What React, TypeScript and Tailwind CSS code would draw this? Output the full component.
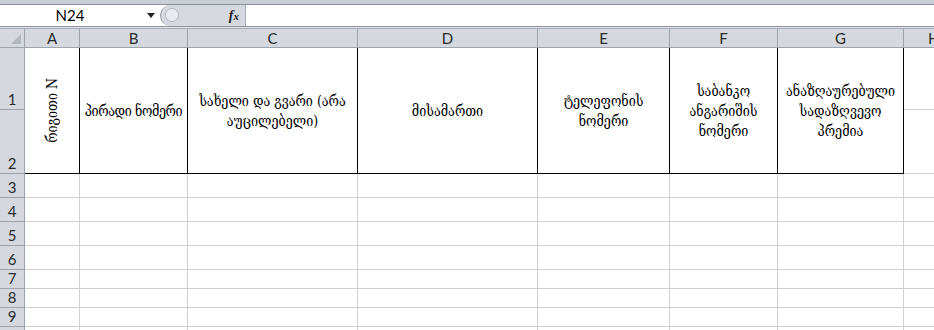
import React from "react";

const cols = ["A", "B", "C", "D", "E", "F", "G"];

const heads = [
  "პირადი ნომერი",
  "სახელი და გვარი (არა აუცილებელი)",
  "მისამართი",
  "ტელეფონის ნომერი",
  "საბანკო ანგარიშის ნომერი",
  "ანაზღაურებული სადაზღვევო პრემია",
];

const bodyRows = [3, 4, 5, 6, 7, 8, 9, 10];

const geo = { fontFamily: '"DejaVu Serif Condensed", "DejaVu Serif", serif' };
const ui = { fontFamily: 'Lato, "Open Sans", "Liberation Sans", sans-serif' };

function RowHead({ n }: { n: number | string }) {
  return (
    <div
      className="bg-[#d5d9df] border-r border-b border-[#9ea4ab] flex items-end justify-center text-[15px] leading-[18px] text-[#2b2b2b] pb-[1px]"
      style={ui}
    >
      {n}
    </div>
  );
}

export default function App() {
  return (
    <div className="w-[934px] h-[330px] overflow-hidden bg-white">
      {/* formula bar */}
      <div className="h-[5px] bg-[#c9ced5] border-b border-[#8c9299]" />
      <div className="h-[21px] flex bg-white">
        <div className="w-[160px] flex items-center relative">
          <span className="w-[140px] text-center text-[15px] text-black" style={ui}>
            N24
          </span>
          <span className="absolute left-[147px] top-[8px] w-0 h-0 border-l-[4px] border-r-[4px] border-t-[5px] border-l-transparent border-r-transparent border-t-[#222]" />
        </div>
        <div className="w-[85px] h-[21px] bg-[#d6dae0] rounded-l-full border-l border-[#8f959c] flex items-center relative">
          <span className="absolute left-[4px] top-[3px] w-[14px] h-[14px] rounded-full bg-[#e8ebef] border border-[#b5bac1]" />
          <span className="ml-auto mr-[6px] text-[14px] italic font-bold text-[#222]" style={{ fontFamily: '"Liberation Serif", serif' }}>
            f<span className="text-[11px]">x</span>
          </span>
        </div>
        <div className="flex-1 border-l border-[#a9aeb5] bg-white" />
      </div>
      <div className="h-[1px] bg-[#8c9299]" />
      <div className="h-[2px] bg-[#e3e6ea] border-b border-[#a4a9b0]" />

      {/* sheet */}
      <div className="grid grid-cols-[25px_55px_108px_170px_180px_132px_108px_126px_1fr] grid-rows-[19px_62px_64px_24px_24px_24px_24px_19px_19px_19px_19px]">
        <div className="bg-[#d5d9df] border-r border-b border-[#9ea4ab] relative">
          <span className="absolute right-[3px] bottom-[3px] w-0 h-0 border-solid border-l-[10px] border-b-[10px] border-l-transparent border-b-[#b4b9c0]" />
        </div>
        {[...cols, "H"].map((c) => (
          <div
            key={c}
            className={`bg-[#d5d9df] border-r border-b border-[#9ea4ab] flex items-center text-[15px] text-[#2b2b2b] ${c === "H" ? "justify-start pl-[24px]" : "justify-center"}`}
            style={ui}
          >
            {c}
          </div>
        ))}

        {/* row 1-2, merged header cells */}
        <RowHead n={1} />
        <div className="row-span-2 border-r border-b border-black flex items-center justify-center">
          <span className="[writing-mode:vertical-rl] rotate-180 text-[14px] text-black whitespace-nowrap" style={geo}>
            რიგითი N
          </span>
        </div>
        {heads.map((h, i) => (
          <div
            key={h}
            className={`row-span-2 border-r border-b border-black flex items-center justify-center text-center text-[14px] leading-[20px] text-black ${i === 0 ? "px-0 whitespace-nowrap tracking-[-0.4px]" : "px-[3px]"}`}
            style={geo}
          >
            {h}
          </div>
        ))}
        <div className="border-r border-b border-[#d0d0d0]" />
        <RowHead n={2} />
        <div className="border-r border-b border-[#d0d0d0]" />

        {bodyRows.map((r) => (
          <React.Fragment key={r}>
            <RowHead n={r < 10 ? r : ""} />
            {[...cols, "H"].map((c) => (
              <div key={c} className="border-r border-b border-[#d0d0d0]" />
            ))}
          </React.Fragment>
        ))}
      </div>
    </div>
  );
}
